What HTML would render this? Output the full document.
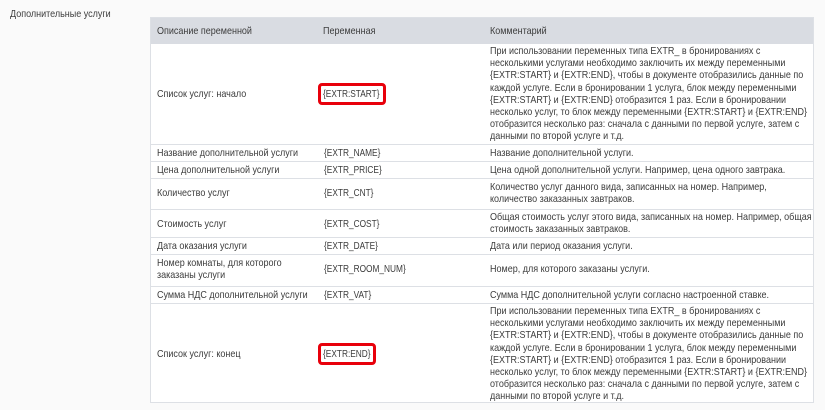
<!DOCTYPE html>
<html><head><meta charset="utf-8"><style>
body{margin:0;width:825px;height:410px;background:#fafafa;font-family:"Liberation Sans",sans-serif;font-size:10.4px;color:#3c3c3c;position:relative;overflow:hidden}
.t{position:absolute;left:150px;top:17px;width:664px;height:386px;background:#fff;border:1px solid #dde0e5;box-sizing:border-box}
.h{position:absolute;left:0;top:0;width:100%;height:26px;background:#d9dce2}
.r{position:absolute;left:0;width:100%;border-top:1px solid #dde0e5}
.c{position:absolute;white-space:nowrap;line-height:12.2px;transform:scaleX(0.866);transform-origin:0 0}
.v{transform:scaleX(0.8)}
.red{position:absolute;border:3px solid #e8000b;border-radius:4px;box-sizing:border-box}
</style></head><body>
<div class="c" style="left:10px;top:9px">Дополнительные услуги</div>
<div class="t">
<div class="h"></div>
<div class="c" style="left:6px;top:8px">Описание переменной</div>
<div class="c" style="left:172px;top:8px">Переменная</div>
<div class="c" style="left:339px;top:8px">Комментарий</div>

<div class="c" style="left:6px;top:71px">Список услуг: начало</div>
<div class="c v" style="left:172px;top:71px">{EXTR:START}</div>
<div class="red" style="left:167px;top:65px;width:68px;height:22px"></div>
<div class="c" style="left:339px;top:28px">При использовании переменных типа EXTR_ в бронированиях с<br>несколькими услугами необходимо заключить их между переменными<br>{EXTR:START} и {EXTR:END}, чтобы в документе отобразились данные по<br>каждой услуге. Если в бронировании 1 услуга, блок между переменными<br>{EXTR:START} и {EXTR:END} отобразится 1 раз. Если в бронировании<br>несколько услуг, то блок между переменными {EXTR:START} и {EXTR:END}<br>отобразится несколько раз: сначала с данными по первой услуге, затем с<br>данными по второй услуге и т.д.</div>

<div class="r" style="top:126px"></div>
<div class="c" style="left:6px;top:130px">Название дополнительной услуги</div>
<div class="c v" style="left:173px;top:130px">{EXTR_NAME}</div>
<div class="c" style="left:339px;top:130px">Название дополнительной услуги.</div>

<div class="r" style="top:143px"></div>
<div class="c" style="left:6px;top:147px">Цена дополнительной услуги</div>
<div class="c v" style="left:173px;top:147px">{EXTR_PRICE}</div>
<div class="c" style="left:339px;top:147px">Цена одной дополнительной услуги. Например, цена одного завтрака.</div>

<div class="r" style="top:160px"></div>
<div class="c" style="left:6px;top:170px">Количество услуг</div>
<div class="c v" style="left:173px;top:170px">{EXTR_CNT}</div>
<div class="c" style="left:339px;top:164px">Количество услуг данного вида, записанных на номер. Например,<br>количество заказанных завтраков.</div>

<div class="r" style="top:191px"></div>
<div class="c" style="left:6px;top:201px">Стоимость услуг</div>
<div class="c v" style="left:173px;top:201px">{EXTR_COST}</div>
<div class="c" style="left:339px;top:194px">Общая стоимость услуг этого вида, записанных на номер. Например, общая<br>стоимость заказанных завтраков.</div>

<div class="r" style="top:219px"></div>
<div class="c" style="left:6px;top:223px">Дата оказания услуги</div>
<div class="c v" style="left:173px;top:223px">{EXTR_DATE}</div>
<div class="c" style="left:339px;top:223px">Дата или период оказания услуги.</div>

<div class="r" style="top:236px"></div>
<div class="c" style="left:6px;top:240px">Номер комнаты, для которого<br>заказаны услуги</div>
<div class="c v" style="left:173px;top:246px">{EXTR_ROOM_NUM}</div>
<div class="c" style="left:339px;top:246px">Номер, для которого заказаны услуги.</div>

<div class="r" style="top:268px"></div>
<div class="c" style="left:6px;top:272px">Сумма НДС дополнительной услуги</div>
<div class="c v" style="left:173px;top:272px">{EXTR_VAT}</div>
<div class="c" style="left:339px;top:272px">Сумма НДС дополнительной услуги согласно настроенной ставке.</div>

<div class="r" style="top:285px"></div>
<div class="c" style="left:6px;top:331px">Список услуг: конец</div>
<div class="c v" style="left:172px;top:331px">{EXTR:END}</div>
<div class="red" style="left:167px;top:325px;width:58px;height:22px"></div>
<div class="c" style="left:339px;top:288px">При использовании переменных типа EXTR_ в бронированиях с<br>несколькими услугами необходимо заключить их между переменными<br>{EXTR:START} и {EXTR:END}, чтобы в документе отобразились данные по<br>каждой услуге. Если в бронировании 1 услуга, блок между переменными<br>{EXTR:START} и {EXTR:END} отобразится 1 раз. Если в бронировании<br>несколько услуг, то блок между переменными {EXTR:START} и {EXTR:END}<br>отобразится несколько раз: сначала с данными по первой услуге, затем с<br>данными по второй услуге и т.д.</div>
</div>
</body></html>
